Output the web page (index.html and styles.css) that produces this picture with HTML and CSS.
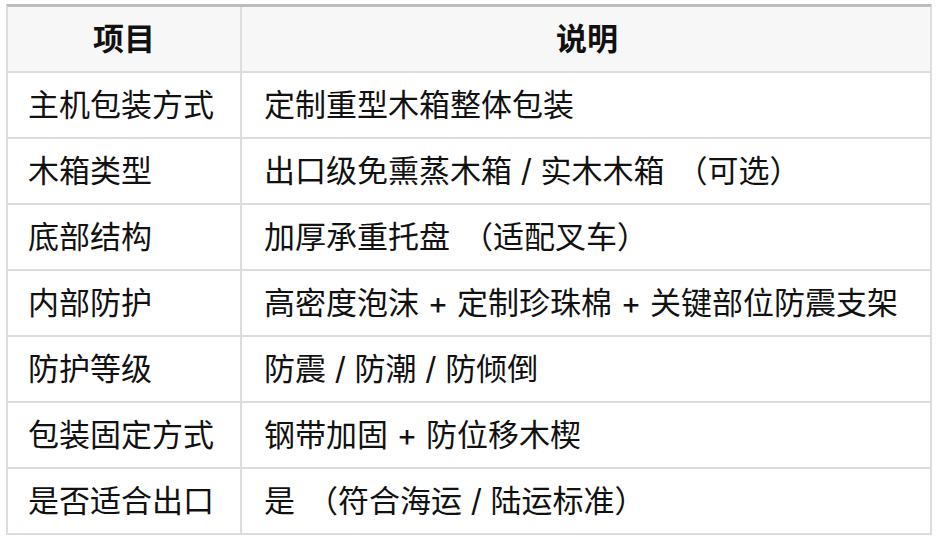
FILE: index.html
```html
<!DOCTYPE html>
<html lang="zh-CN">
<head>
<meta charset="utf-8">
<title>包装说明</title>
<link rel="stylesheet" href="styles.css">
</head>
<body>
<div class="wrap">
<table class="spec">
<thead>
<tr><th class="k">项目</th><th class="v">说明</th></tr>
</thead>
<tbody>
<tr><td class="k">主机包装方式</td><td class="v">定制重型木箱整体包装</td></tr>
<tr><td class="k">木箱类型</td><td class="v">出口级免熏蒸木箱 / 实木木箱<span class="po">（</span>可选）</td></tr>
<tr><td class="k">底部结构</td><td class="v">加厚承重托盘<span class="po">（</span>适配叉车）</td></tr>
<tr><td class="k">内部防护</td><td class="v">高密度泡沫 + 定制珍珠棉 + 关键部位防震支架</td></tr>
<tr><td class="k">防护等级</td><td class="v">防震 / 防潮 / 防倾倒</td></tr>
<tr><td class="k">包装固定方式</td><td class="v">钢带加固 + 防位移木楔</td></tr>
<tr><td class="k">是否适合出口</td><td class="v">是<span class="po">（</span>符合海运 / 陆运标准）</td></tr>
</tbody>
</table>
</div>
</body>
</html>
```
FILE: styles.css
```css
html, body {
  margin: 0;
  padding: 0;
  background: #fff;
}
.wrap {
  padding: 4px 6px 0 6px;
}
.spec {
  width: 926px;
  table-layout: fixed;
  border-collapse: separate;
  border-spacing: 0;
  border: 2px solid #dddddd;
  border-top: 3px solid #bdbdbd;
  font-family: "Inter", "Noto Sans CJK SC", sans-serif;
  font-size: 31px;
  color: #111;
}
.spec th, .spec td {
  box-sizing: border-box;
  height: 64px;
  padding: 0 20px;
  line-height: 44px;
  vertical-align: middle;
  text-align: left;
  white-space: nowrap;
}
.spec td {
  border-top: 2px solid #dddddd;
  height: 66px;
}
.spec .k {
  width: 234px;
  border-right: 2px solid #dddddd;
}
.spec .v {
  padding-left: 22px;
}
.spec th {
  background: #f7f7f7;
  font-weight: 700;
  text-align: center;
}
.po {
  margin-left: 12px;
}
```
